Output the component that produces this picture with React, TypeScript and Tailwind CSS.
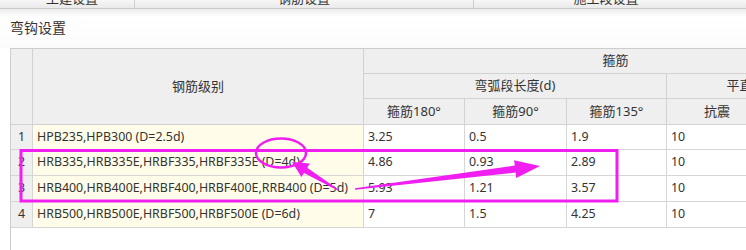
import React from "react";

const font = { fontFamily: '"Noto Sans", "Noto Sans CJK SC", sans-serif' };

const rows = [
  { n: "1", name: "HPB235,HPB300 (D=2.5d)", v: ["3.25", "0.5", "1.9", "10", "5"] },
  { n: "2", name: "HRB335,HRB335E,HRBF335,HRBF335E (D=4d)", v: ["4.86", "0.93", "2.89", "10", "5"] },
  { n: "3", name: "HRB400,HRB400E,HRBF400,HRBF400E,RRB400 (D=5d)", v: ["5.93", "1.21", "3.57", "10", "5"] },
  { n: "4", name: "HRB500,HRB500E,HRBF500,HRBF500E (D=6d)", v: ["7", "1.5", "4.25", "10", "5"] },
];

const hdr = "bg-[#efefef] border-r border-b border-[#d2d2d2] flex items-center justify-center text-[13px] text-[#333]";
const cell = "border-r border-b border-[#d6d6d6] flex items-center text-[12.4px] text-[#333] whitespace-nowrap overflow-hidden";

export default function App() {
  return (
    <div className="relative w-[746px] h-[250px] overflow-hidden bg-white" style={font}>
      {/* top tab strip */}
      <div className="h-[9px] overflow-hidden bg-gradient-to-b from-[#f7f7f7] to-[#e9e9e9] border-b border-[#c9c9c9] flex">
        <div className="w-[135px] border-r border-[#cfcfcf] flex justify-center">
          <span className="text-[13px] leading-[13px] -mt-[8px] text-[#333] pl-[10px]">土建设置</span>
        </div>
        <div className="w-[339px] border-r border-[#cfcfcf] flex justify-center">
          <span className="text-[13px] leading-[13px] -mt-[8px] text-[#333]">钢筋设置</span>
        </div>
        <div className="flex-1 flex justify-center">
          <span className="text-[13px] leading-[13px] -mt-[8px] text-[#333] pr-[8px]">施工段设置</span>
        </div>
      </div>
      {/* dialog header area */}
      <div className="h-[39px] bg-gradient-to-b from-[#ececec] via-white via-[20%] to-[#fbfbfb] pl-[10px] pt-[11px]">
        <div className="text-[14px] leading-[16px] text-[#333]">弯钩设置</div>
      </div>
      {/* table */}
      <div className="ml-[10px] h-[202px] border-l border-t border-[#cdcdcd] overflow-hidden">
        <div className="grid w-[857px] grid-cols-[22px_331px_101px_102px_100px_101px_100px] grid-rows-[25px_25px_26px_25px_26px_26px_26px]">
          <div className={`${hdr} row-span-3`}></div>
          <div className={`${hdr} row-span-3`}>钢筋级别</div>
          <div className={`${hdr} col-span-5`}>箍筋</div>
          <div className={`${hdr} col-span-3`}>弯弧段长度(d)</div>
          <div className={`${hdr} col-span-2`}>平直段长度(d)</div>
          <div className={hdr}>箍筋180°</div>
          <div className={hdr}>箍筋90°</div>
          <div className={hdr}>箍筋135°</div>
          <div className={hdr}>抗震</div>
          <div className={hdr}>非抗震</div>
          {rows.map((r) => (
            <React.Fragment key={r.n}>
              <div className={`${cell} bg-[#efefef] justify-center`}>{r.n}</div>
              <div className={`${cell} bg-[#fffde9] pl-[4px]`}>{r.name}</div>
              {r.v.map((v, i) => (
                <div key={i} className={`${cell} bg-white pl-[4px]`}>{v}</div>
              ))}
            </React.Fragment>
          ))}
        </div>
      </div>
      {/* annotations */}
      <svg className="absolute left-0 top-0 pointer-events-none" width="746" height="250" viewBox="0 0 746 250">
        <rect x="21" y="150.5" width="596" height="50.5" fill="none" stroke="#f01ef0" strokeWidth="3" />
        <ellipse cx="281" cy="153" rx="25" ry="14.5" fill="none" stroke="#f01ef0" strokeWidth="2.5" />
        <polygon
          fill="#f01ef0"
          points="338.3,189.6 307.2,167.7 309.8,163.5 292,162 301.4,177.1 304.0,172.9 337.7,190.4"
        />
        <polygon
          fill="#f01ef0"
          points="354.9,188.2 514.8,165.6 514.1,160.2 540,166 516.3,178.0 515.6,172.6 355.1,189.8"
        />
      </svg>
    </div>
  );
}
